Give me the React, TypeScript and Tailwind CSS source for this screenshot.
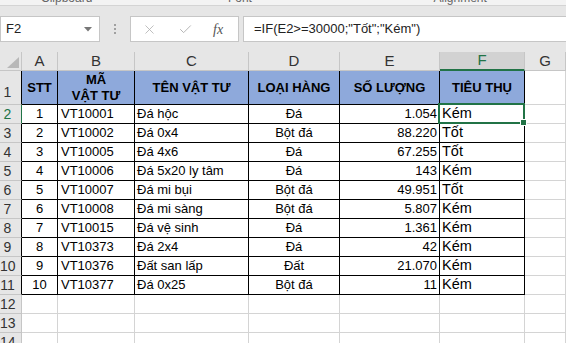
import { X, Check } from 'lucide-react'

const rows = [
  ['1', 'VT10001', 'Đá hộc', 'Đá', '1.054', 'Kém'],
  ['2', 'VT10002', 'Đá 0x4', 'Bột đá', '88.220', 'Tốt'],
  ['3', 'VT10005', 'Đá 4x6', 'Đá', '67.255', 'Tốt'],
  ['4', 'VT10006', 'Đá 5x20 ly tâm', 'Đá', '143', 'Kém'],
  ['5', 'VT10007', 'Đá mi bụi', 'Bột đá', '49.951', 'Tốt'],
  ['6', 'VT10008', 'Đá mi sàng', 'Bột đá', '5.807', 'Kém'],
  ['7', 'VT10015', 'Đá vệ sinh', 'Đá', '1.361', 'Kém'],
  ['8', 'VT10373', 'Đá 2x4', 'Đá', '42', 'Kém'],
  ['9', 'VT10376', 'Đất san lấp', 'Đất', '21.070', 'Kém'],
  ['10', 'VT10377', 'Đá 0x25', 'Bột đá', '11', 'Kém'],
]

const letters = ['A', 'B', 'C', 'D', 'E', 'F', 'G']

function Cell({
  className = '',
  children,
}: {
  className?: string
  children?: React.ReactNode
}) {
  return (
    <div
      className={`flex items-center whitespace-nowrap border-b border-r ${className}`}
    >
      {children}
    </div>
  )
}

function RowHead({ n, selected, inTable }: { n: number; selected?: boolean; inTable?: boolean }) {
  const border = selected
    ? 'border-r-[#217346] border-b-[#c6c6c6]'
    : inTable
      ? 'border-r-black border-b-[#c6c6c6]'
      : 'border-r-[#c6c6c6] border-b-[#c6c6c6]'
  return (
    <Cell
      className={`${n === 1 ? 'h-[34px] items-end pb-[1px]' : 'h-[19px]'} overflow-hidden bg-[#e6e6e6] text-[14px] ${border} ${selected ? 'text-[#217346]' : 'text-[#333]'}`}
    >
      <span className="w-[15px] text-center">{n}</span>
    </Cell>
  )
}

export default function App() {
  const data = 'border-r-black border-b-black h-[19px] bg-white text-[13px] text-black'
  const grid = 'border-r-[#d4d4d4] border-b-[#d4d4d4] h-[19px] bg-white'
  return (
    <div
      className="h-[343px] w-[566px] overflow-hidden bg-[#e6e6e6]"
      style={{ fontFamily: '"Liberation Sans", Arial, sans-serif' }}
    >
      <div className="h-[6px] overflow-hidden border-b border-[#d4d4d4] bg-[#f3f3f3] text-[12px] text-[#666]">
        <div className="-mt-[11px] flex items-start">
          <span className="ml-[41px]">Clipboard</span>
          <span className="ml-[46px] text-[10px]">▫</span>
          <span className="ml-[86px]">Font</span>
          <span className="ml-[88px] text-[10px]">▫</span>
          <span className="ml-[90px]">Alignment</span>
        </div>
      </div>

      {/* formula bar */}
      <div className="flex h-[46px] items-start pt-[10px]">
        <div className="flex h-[26px] w-[100px] items-center justify-between border border-[#c6c6c6] bg-white pl-[5px] pr-[7px] text-[13px] text-[#222]">
          <span>F2</span>
          <svg width="8" height="5" viewBox="0 0 8 5">
            <path d="M0 0h8L4 4.5z" fill="#777" />
          </svg>
        </div>
        <div className="flex h-[26px] w-[30px] flex-col items-center justify-center gap-[2px]">
          <span className="h-[2px] w-[2px] bg-[#a0a0a0]" />
          <span className="h-[2px] w-[2px] bg-[#a0a0a0]" />
          <span className="h-[2px] w-[2px] bg-[#a0a0a0]" />
        </div>
        <div className="flex h-[26px] w-[109px] items-center border border-[#c6c6c6] bg-white">
          <X size={15} strokeWidth={1.3} className="ml-[11px] text-[#b0b0b0]" />
          <Check size={15} strokeWidth={1.5} className="ml-[21px] text-[#b0b0b0]" />
          <span
            className="ml-[20px] text-[14px] italic text-[#555]"
            style={{ fontFamily: '"Liberation Serif", serif' }}
          >
            fx
          </span>
        </div>
        <div className="ml-[4px] flex h-[26px] flex-1 items-center border border-r-0 border-[#c6c6c6] bg-white pl-[10px] text-[13px] text-[#222]">
          =IF(E2&gt;=30000;"Tốt";"Kém")
        </div>
      </div>

      {/* sheet */}
      <div className="grid grid-cols-[22px_36px_77px_114px_91px_100px_85px_1fr]">
        {/* column headers */}
        <Cell className="h-[19px] items-end justify-end border-b-[#c6c6c6] border-r-[#c6c6c6] bg-[#e6e6e6] pb-[2px] pr-[2px]">
          <svg width="12" height="11" viewBox="0 0 12 11">
            <path d="M12 0v11H0z" fill="#b8b8b8" />
          </svg>
        </Cell>
        {letters.map((l) =>
          l === 'F' ? (
            <Cell
              key={l}
              className="h-[19px] justify-center border-b-2 border-b-[#217346] border-r-[#c6c6c6] bg-[#d2d2d2] text-[15px] text-[#217346]"
            >
              {l}
            </Cell>
          ) : (
            <Cell
              key={l}
              className="h-[19px] justify-center border-b-[#c6c6c6] border-r-[#c6c6c6] bg-[#e6e6e6] text-[15px] text-[#333]"
            >
              {l}
            </Cell>
          )
        )}

        {/* row 1: table header */}
        <RowHead n={1} inTable />
        {['STT', 'MÃ\nVẬT TƯ', 'TÊN VẬT TƯ', 'LOẠI HÀNG', 'SỐ LƯỢNG', 'TIÊU THỤ'].map((h) => (
          <Cell
            key={h}
            className="h-[34px] justify-center whitespace-pre-line border-b-black border-r-black bg-[#8ea9db] text-center text-[13px] font-bold leading-[16px] text-black"
          >
            {h}
          </Cell>
        ))}
        <Cell className={`${grid} h-[34px]`} />

        {/* data rows */}
        {rows.map((r, i) => (
          <div key={r[0]} className="contents">
            <RowHead n={i + 2} inTable selected={i === 0} />
            <Cell className={`${data} justify-center`}>{r[0]}</Cell>
            <Cell className={`${data} pl-[3px]`}>{r[1]}</Cell>
            <Cell className={`${data} pl-[2px]`}>{r[2]}</Cell>
            <Cell className={`${data} justify-center`}>{r[3]}</Cell>
            <Cell className={`${data} justify-end pr-[2px]`}>{r[4]}</Cell>
            <Cell className={`${data} relative pl-[2px] text-[14.5px]`}>
              {r[5]}
              {i === 0 && (
                <span className="pointer-events-none absolute -left-[2px] -top-[2px] z-10 h-[21px] w-[87px] border-2 border-[#217346]">
                  <span className="absolute -bottom-[4px] -right-[4px] h-[7px] w-[7px] border border-white bg-[#217346]" />
                </span>
              )}
            </Cell>
            <Cell className={grid} />
          </div>
        ))}

        {/* empty rows */}
        {[12, 13, 14].map((n) => (
          <div key={n} className="contents">
            <RowHead n={n} />
            {letters.map((l) => (
              <Cell key={l} className={grid} />
            ))}
          </div>
        ))}
      </div>
    </div>
  )
}
